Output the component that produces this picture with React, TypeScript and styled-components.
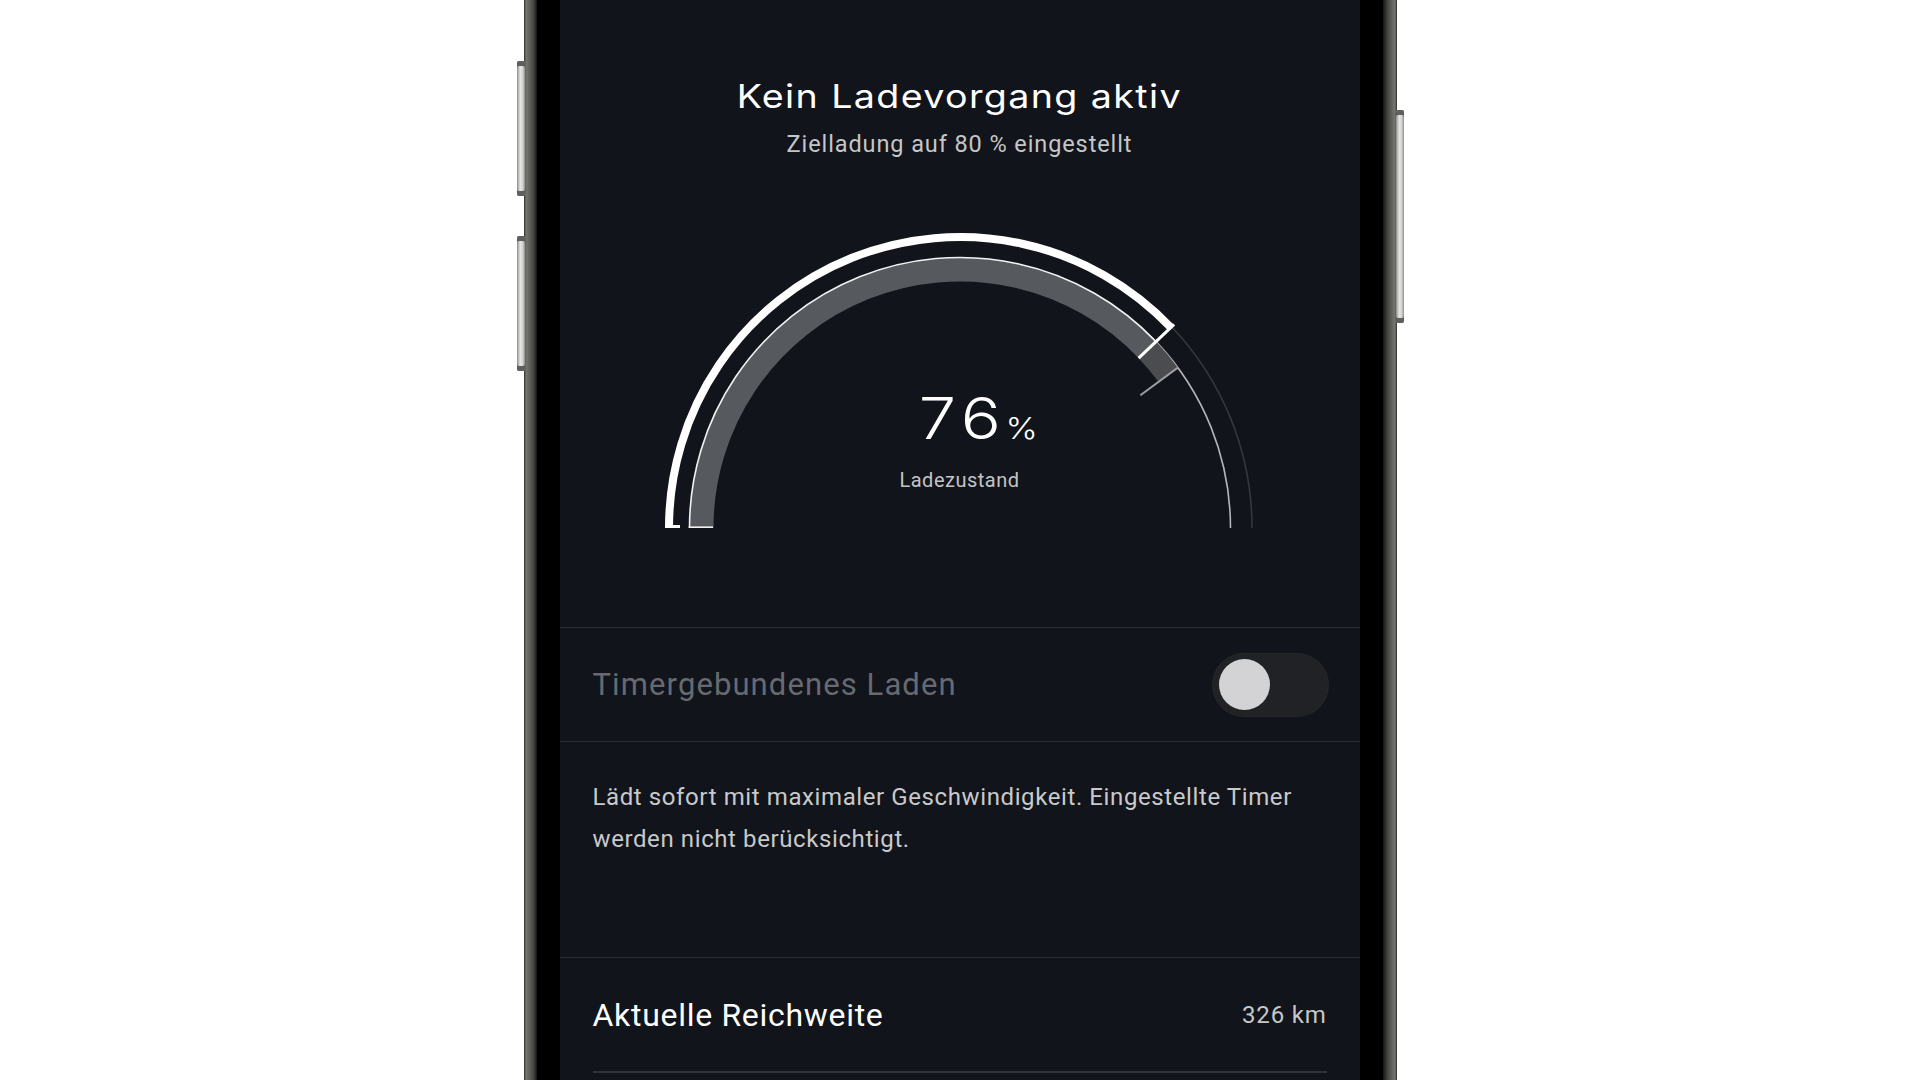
import React from "react";
import styled, { createGlobalStyle } from "styled-components";

const GlobalStyle = createGlobalStyle`
  html, body { margin: 0; padding: 0; background: #ffffff; }
  body { font-family: Roboto, "Liberation Sans", sans-serif; }
  * { box-sizing: border-box; }
`;

const Stage = styled.div`
  width: 100%;
  height: 1080px;
  overflow: hidden;
  display: flex;
  justify-content: center;
  background: #ffffff;
`;

const Phone = styled.div`
  position: relative;
  flex: none;
  width: 873px;
  height: 1080px;
  padding: 0 37px 0 36px;
  background:
    linear-gradient(90deg, #2b2b29 0px, #77776f 2px, #5d5d58 6px, #3f3f3c 10px, #141414 13px, transparent 13px),
    linear-gradient(270deg, #2b2b29 0px, #77776f 2px, #5d5d58 6px, #3f3f3c 10px, #141414 14px, transparent 14px),
    #000000;
`;

const SideButton = styled.div<{ $side: "left" | "right"; $top: number; $height: number }>`
  position: absolute;
  top: ${(p) => p.$top}px;
  ${(p) => (p.$side === "left" ? "left: -7px;" : "right: -7px;")}
  width: 8px;
  height: ${(p) => p.$height}px;
  border-radius: 2px;
  background: linear-gradient(90deg, #8c8c8a 0%, #e6e6e4 40%, #d4d4d2 70%, #8f8f8d 100%);
  box-shadow: inset 0 5px 0 #5f5f5d, inset 0 -5px 0 #5f5f5d;
`;

const Screen = styled.div`
  height: 100%;
  width: 800px;
  background: #11141a;
  display: flex;
  flex-direction: column;
`;

const Header = styled.div`
  padding-top: 76px;
  display: flex;
  flex-direction: column;
  align-items: center;
`;

const Title = styled.h1`
  margin: 0;
  font-family: Inter, "Open Sans", sans-serif;
  font-weight: 400;
  font-size: 33px;
  line-height: 40px;
  letter-spacing: 1.2px;
  color: #ffffff;
  transform: scaleX(1.14);
`;

const Subtitle = styled.div`
  margin-top: 13px;
  font-family: Roboto, "Liberation Sans", sans-serif;
  font-size: 23.5px;
  line-height: 30px;
  letter-spacing: 0.9px;
  color: #c5c6c8;
`;

const Gauge = styled.div`
  margin-top: 66px;
  display: grid;
  justify-items: center;
`;

const GaugeSvg = styled.svg`
  grid-area: 1 / 1;
  display: block;
`;

const Readout = styled.div`
  grid-area: 1 / 1;
  align-self: start;
  margin-top: 161px;
  display: flex;
  flex-direction: column;
  align-items: center;
`;

const Value = styled.div`
  font-family: Inter, "Open Sans", sans-serif;
  font-weight: 300;
  font-size: 58px;
  line-height: 64px;
  letter-spacing: 5px;
  color: #ffffff;
  white-space: nowrap;
  transform: scaleX(1.15) translateX(2px);
`;

const Unit = styled.span`
  display: inline-block;
  width: 0;
  overflow: visible;
  white-space: nowrap;
  font-size: 30px;
  letter-spacing: 0;
  margin-left: -1px;
`;

const ValueLabel = styled.div`
  margin-top: 8px;
  font-family: Roboto, "Liberation Sans", sans-serif;
  font-size: 20px;
  line-height: 24px;
  letter-spacing: 0.5px;
  color: #c3c4c6;
`;

const SettingRow = styled.div`
  margin-top: 92px;
  height: 115px;
  padding: 0 32px 0 33px;
  border-top: 1px solid #2a2d34;
  border-bottom: 1px solid #2a2d34;
  display: flex;
  align-items: center;
  justify-content: space-between;
`;

const SettingLabel = styled.div`
  font-family: Roboto, "Liberation Sans", sans-serif;
  font-size: 31px;
  line-height: 36px;
  letter-spacing: 1.1px;
  color: #676a70;
`;

const Toggle = styled.div<{ $on: boolean }>`
  width: 115px;
  height: 62px;
  border-radius: 31px;
  background: #202226;
  box-shadow: 0 0 0 1px #25272b;
  padding: 5px 6px;
  display: flex;
  justify-content: ${(p) => (p.$on ? "flex-end" : "flex-start")};
  align-items: center;
`;

const Knob = styled.div`
  width: 51px;
  height: 51px;
  border-radius: 50%;
  background: #d3d3d6;
`;

const Description = styled.p`
  margin: 0;
  height: 216px;
  padding: 34px 33px 0;
  border-bottom: 1px solid #2a2d34;
  font-family: Roboto, "Liberation Sans", sans-serif;
  font-size: 24px;
  line-height: 42px;
  letter-spacing: 0.6px;
  color: #c8c9cb;
`;

const InfoRow = styled.div`
  margin: 0 33px;
  height: 115px;
  border-bottom: 2px solid #30333a;
  display: flex;
  align-items: center;
  justify-content: space-between;
`;

const InfoLabel = styled.div`
  font-family: Roboto, "Liberation Sans", sans-serif;
  font-size: 32px;
  line-height: 38px;
  letter-spacing: 0.7px;
  color: #ffffff;
`;

const InfoValue = styled.div`
  font-family: Roboto, "Liberation Sans", sans-serif;
  font-size: 24px;
  line-height: 30px;
  letter-spacing: 0.8px;
  color: #c6c7c9;
`;

const CX = 320;
const CY = 303;

const pt = (r: number, p: number): [number, number] => {
  const a = Math.PI * (1 - p);
  return [CX + r * Math.cos(a), CY - r * Math.sin(a)];
};

const arc = (r: number, p0: number, p1: number) => {
  const [x0, y0] = pt(r, p0);
  const [x1, y1] = pt(r, p1);
  return `M ${x0.toFixed(2)} ${y0.toFixed(2)} A ${r} ${r} 0 0 1 ${x1.toFixed(2)} ${y1.toFixed(2)}`;
};

const radial = (r0: number, r1: number, p: number) => {
  const [x0, y0] = pt(r0, p);
  const [x1, y1] = pt(r1, p);
  return `M ${x0.toFixed(2)} ${y0.toFixed(2)} L ${x1.toFixed(2)} ${y1.toFixed(2)}`;
};

const CHARGE = 0.758;
const TARGET = 0.798;

function ChargeGauge() {
  return (
    <GaugeSvg width={640} height={310} viewBox="0 0 640 310">
      <path d={arc(292, CHARGE, 1)} stroke="#34373c" strokeWidth={1.6} fill="none" />
      <path d={arc(270.5, CHARGE, 1)} stroke="#b5b6b8" strokeWidth={1.6} fill="none" />
      <path d={arc(258.5, 0, CHARGE)} stroke="#56595e" strokeWidth={24} fill="none" />
      <path d={arc(258.5, CHARGE, TARGET)} stroke="#4b4c4f" strokeWidth={24} fill="none" />
      <path d={arc(270.5, 0, CHARGE)} stroke="#f2f2f2" strokeWidth={1.6} fill="none" />
      <path d={`M ${CX - 271.3} ${CY - 0.8} L ${CX - 247} ${CY - 0.8}`} stroke="#f2f2f2" strokeWidth={1.6} />
      <path d={arc(291, 0, CHARGE)} stroke="#ffffff" strokeWidth={8} fill="none" />
      <path d={`M ${CX - 295} ${CY - 1.5} L ${CX - 280} ${CY - 1.5}`} stroke="#ffffff" strokeWidth={3} />
      <path d={radial(295.5, 246.5, CHARGE)} stroke="#ffffff" strokeWidth={3} />
      <path d={radial(270.5, 224, TARGET)} stroke="#9c9d9f" strokeWidth={2} />
    </GaugeSvg>
  );
}

export default function App() {
  return (
    <>
      <GlobalStyle />
      <Stage>
        <Phone>
          <SideButton $side="left" $top={61} $height={135} />
          <SideButton $side="left" $top={236} $height={135} />
          <SideButton $side="right" $top={110} $height={213} />
          <Screen>
            <Header>
              <Title>Kein Ladevorgang aktiv</Title>
              <Subtitle>Zielladung auf 80 % eingestellt</Subtitle>
            </Header>
            <Gauge>
              <ChargeGauge />
              <Readout>
                <Value>
                  76<Unit>%</Unit>
                </Value>
                <ValueLabel>Ladezustand</ValueLabel>
              </Readout>
            </Gauge>
            <SettingRow>
              <SettingLabel>Timergebundenes Laden</SettingLabel>
              <Toggle $on={false}>
                <Knob />
              </Toggle>
            </SettingRow>
            <Description>
              Lädt sofort mit maximaler Geschwindigkeit. Eingestellte Timer
              <br />
              werden nicht berücksichtigt.
            </Description>
            <InfoRow>
              <InfoLabel>Aktuelle Reichweite</InfoLabel>
              <InfoValue>326 km</InfoValue>
            </InfoRow>
          </Screen>
        </Phone>
      </Stage>
    </>
  );
}
